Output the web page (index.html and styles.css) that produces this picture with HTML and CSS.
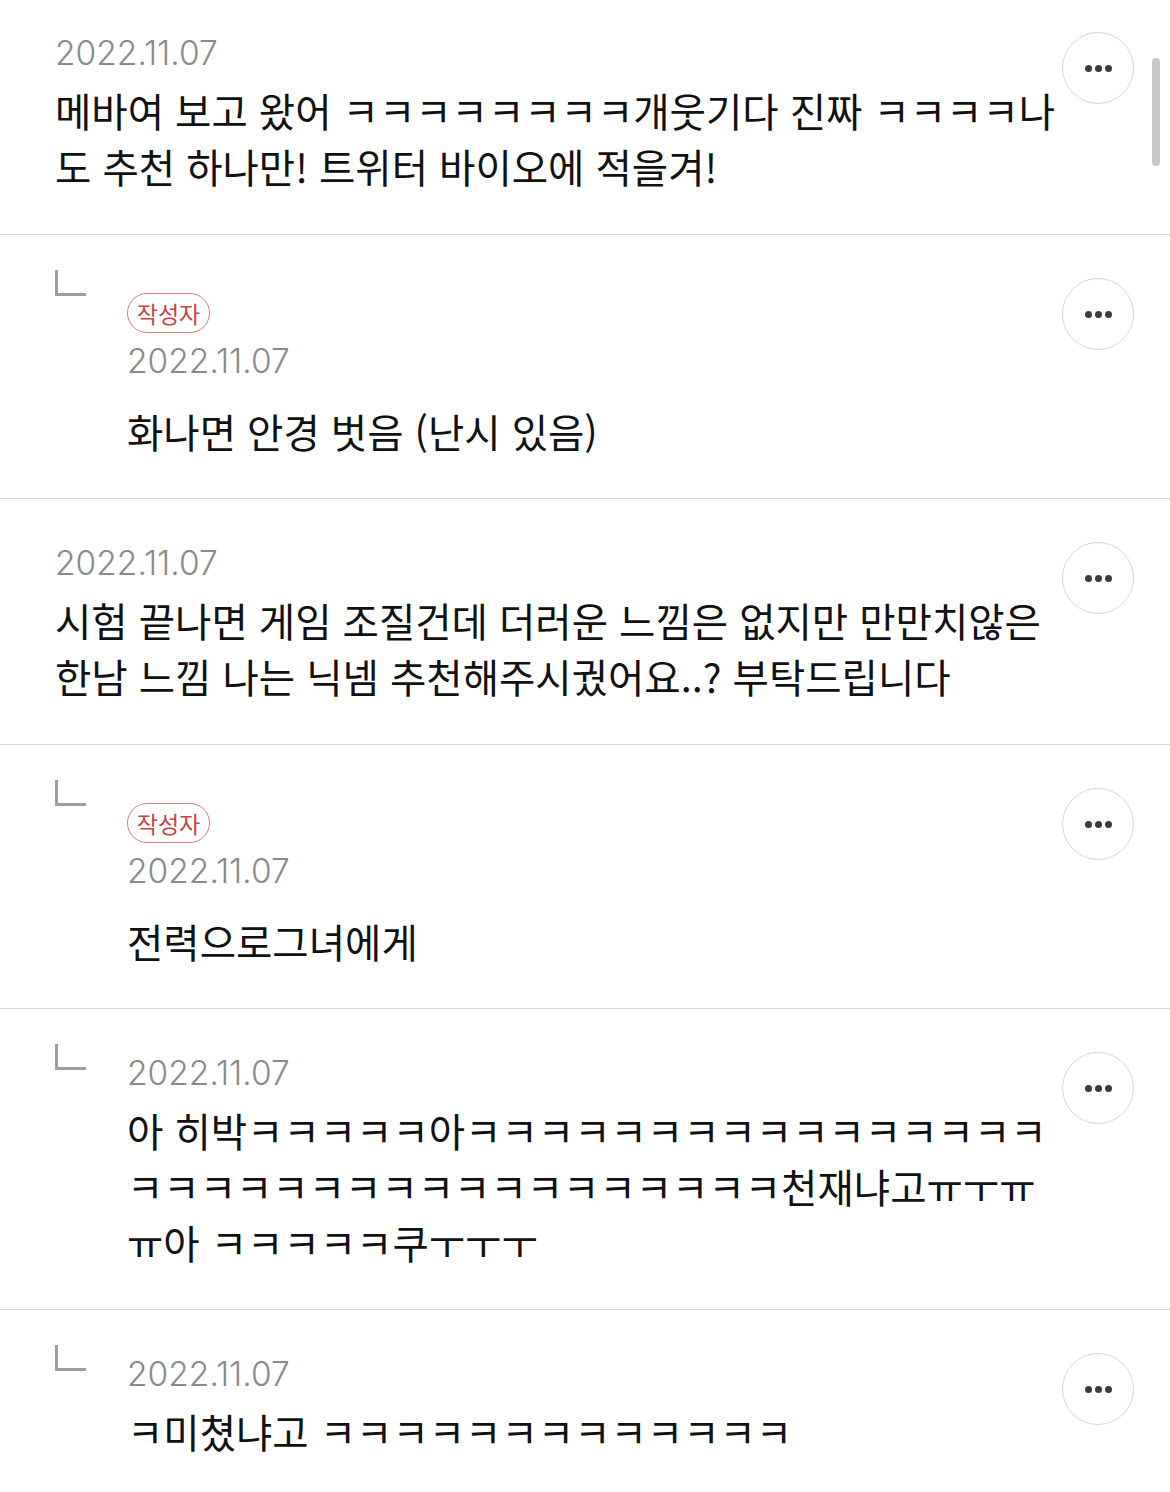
FILE: index.html
```html
<!DOCTYPE html>
<html lang="ko">
<head>
    <meta charset="UTF-8">
    <meta name="viewport" content="width=device-width, initial-scale=1.0">
    <title>댓글</title>
    <link rel="stylesheet" href="styles.css">
</head>
<body>
    <div class="comments">
        <div class="comment">
            <div class="comment-body">
                <div class="date">2022.11.07</div>
                <p class="text">메바여 보고 왔어 ㅋㅋㅋㅋㅋㅋㅋㅋ개웃기다 진짜 ㅋㅋㅋㅋ나도 추천 하나만! 트위터 바이오에 적을겨!</p>
            </div>
            <button class="more-btn"><span></span><span></span><span></span></button>
        </div>

        <div class="comment reply">
            <div class="reply-mark"></div>
            <div class="comment-body">
                <span class="badge">작성자</span>
                <div class="date">2022.11.07</div>
                <p class="text">화나면 안경 벗음 (난시 있음)</p>
            </div>
            <button class="more-btn"><span></span><span></span><span></span></button>
        </div>

        <div class="comment">
            <div class="comment-body">
                <div class="date">2022.11.07</div>
                <p class="text">시험 끝나면 게임 조질건데 더러운 느낌은 없지만 만만치않은 한남 느낌 나는 닉넴 추천해주시궜어요..? 부탁드립니다</p>
            </div>
            <button class="more-btn"><span></span><span></span><span></span></button>
        </div>

        <div class="comment reply">
            <div class="reply-mark"></div>
            <div class="comment-body">
                <span class="badge">작성자</span>
                <div class="date">2022.11.07</div>
                <p class="text">전력으로그녀에게</p>
            </div>
            <button class="more-btn"><span></span><span></span><span></span></button>
        </div>

        <div class="comment reply">
            <div class="reply-mark"></div>
            <div class="comment-body">
                <div class="date">2022.11.07</div>
                <p class="text">아 히박ㅋㅋㅋㅋㅋ아ㅋㅋㅋㅋㅋㅋㅋㅋㅋㅋㅋㅋㅋㅋㅋㅋㅋㅋㅋㅋㅋㅋㅋㅋㅋㅋㅋㅋㅋㅋㅋㅋㅋㅋ천재냐고ㅠㅜㅠㅠ아 ㅋㅋㅋㅋㅋ쿠ㅜㅜㅜ</p>
            </div>
            <button class="more-btn"><span></span><span></span><span></span></button>
        </div>

        <div class="comment reply">
            <div class="reply-mark"></div>
            <div class="comment-body">
                <div class="date">2022.11.07</div>
                <p class="text">ㅋ미쳤냐고 ㅋㅋㅋㅋㅋㅋㅋㅋㅋㅋㅋㅋㅋ</p>
            </div>
            <button class="more-btn"><span></span><span></span><span></span></button>
        </div>
    </div>

    <div class="scrollbar"></div>
</body>
</html>
```

FILE: styles.css
```css
:root {
    --text: #111111;
    --text-light: #8a8a8a;
    --line: #dcdcdc;
    --badge: #c6444a;
    --badge-border: #d97b7f;
    --white: #ffffff;
}

* {
    margin: 0;
    padding: 0;
    box-sizing: border-box;
}

body {
    background-color: var(--white);
    color: var(--text);
    font-family: "Noto Sans CJK KR", "Noto Sans", sans-serif;
    overflow: hidden;
}

.comments {
    margin-top: -11px;
}

.comment {
    display: flex;
    align-items: flex-start;
    padding: 42px 36px 40px 55px;
    border-bottom: 1px solid var(--line);
}

.comment.reply {
    padding-bottom: 39px;
}

.reply-mark {
    flex-shrink: 0;
    width: 31px;
    height: 26px;
    margin-top: -7px;
    margin-right: 41px;
    border-left: 3px solid #9e9e9e;
    border-bottom: 3px solid #9e9e9e;
}

.comment-body {
    flex: 1;
    min-width: 0;
}

.badge {
    display: inline-flex;
    align-items: center;
    justify-content: center;
    height: 40px;
    width: 83px;
    margin-top: 16px;
    margin-bottom: 6px;
    border: 1.5px solid var(--badge-border);
    border-radius: 20px;
    color: var(--badge);
    font-size: 23px;
    line-height: 1;
}

.date {
    height: 44px;
    margin-bottom: 7px;
    color: var(--text-light);
    font-family: Inter, "Noto Sans", sans-serif;
    font-size: 33.5px;
    font-weight: 300;
    line-height: 44px;
}

.badge + .date {
    margin-bottom: 20px;
}

.text {
    font-size: 39.5px;
    line-height: 56px;
    word-break: normal;
}

.more-btn {
    flex-shrink: 0;
    display: flex;
    align-items: center;
    justify-content: center;
    gap: 3px;
    width: 72px;
    height: 72px;
    margin-top: 1px;
    border: 1.5px solid #d6d6d6;
    border-radius: 50%;
    background: var(--white);
    cursor: pointer;
}

.more-btn span {
    width: 7px;
    height: 7px;
    border-radius: 50%;
    background-color: #3b3b3b;
}

.scrollbar {
    position: fixed;
    top: 58px;
    right: 10px;
    width: 8px;
    height: 108px;
    border-radius: 4px;
    background-color: #c8c8c8;
}
```
